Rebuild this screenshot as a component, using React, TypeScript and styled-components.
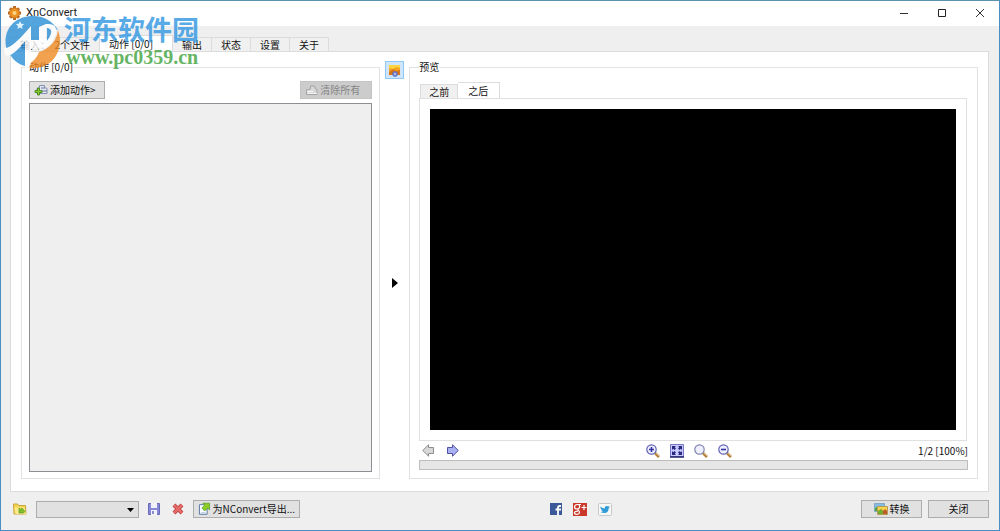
import React, { useState } from "react";
import styled, { createGlobalStyle, css } from "styled-components";

const GlobalStyle = createGlobalStyle`
  * { box-sizing: border-box; }
  body { margin: 0; }
  body, button, select, fieldset {
    font-family: "Noto Sans CJK SC", sans-serif;
    font-size: 10px;
    line-height: 14px;
    color: #111;
  }
`;

const Window = styled.div`
  position: relative;
  display: flex;
  flex-direction: column;
  min-height: 100vh;
  border: 1px solid #4a8fc4;
  border-top-color: #5b93ae;
  background: #efefef;
`;

const TitleBar = styled.header`
  display: flex;
  align-items: center;
  height: 25px;
  padding: 0 0 2px 6px;
  background: #fff;
`;

const Title = styled.h1`
  flex: 1;
  margin: 0 0 0 4px;
  font: 400 11px/16px Roboto, sans-serif;
  color: #222;
`;

const CaptionButton = styled.button`
  width: 38px;
  height: 22px;
  padding: 0;
  border: 0;
  background: transparent;
  svg { display: block; margin: 0 auto; }
`;

const MainTabs = styled.div`
  display: flex;
  align-items: flex-end;
  height: 26px;
  margin-bottom: -1px;
  padding: 0 9px;
`;

const Tab = styled.button<{ $selected?: boolean; $wide?: boolean }>`
  height: 15px;
  padding: 0 9px;
  border: 1px solid #dcdcdc;
  border-left-width: 0;
  background: #f0f0f0;
  line-height: 13px;
  text-align: left;
  white-space: pre;
  &:first-child { border-left-width: 1px; }
  ${(p) => p.$wide && css`min-width: 89px;`}
  ${(p) => p.$selected && css`
    height: 17px;
    min-width: 73px;
    border-bottom-color: #fff;
    background: #fff;
  `}
`;

const Page = styled.main`
  flex: 1;
  display: grid;
  grid-template-columns: minmax(0, 12fr) 29px minmax(0, 19fr);
  margin: 0 10px 0 9px;
  padding: 7px 10px 12px;
  border: 1px solid #dcdcdc;
  background: #fff;
`;

const Group = styled.fieldset`
  display: flex;
  flex-direction: column;
  min-width: 0;
  margin: 0;
  padding: 6px 7px;
  border: 1px solid #e2e2e2;
`;

const PreviewGroup = styled(Group)`
  padding: 6px 9px 8px;
`;

const Legend = styled.legend`
  height: 16px;
  padding: 0;
  line-height: 16px;
  background: #fff;
  white-space: pre;
`;

const Toolbar = styled.div`
  display: flex;
  justify-content: space-between;
`;

const PushButton = styled.button<{ $width: number; $start?: boolean }>`
  display: flex;
  align-items: center;
  justify-content: ${(p) => (p.$start ? "flex-start" : "center")};
  gap: 2px;
  width: ${(p) => p.$width}px;
  height: 18px;
  padding: 0 ${(p) => (p.$start ? 4 : 0)}px;
  border: 1px solid #adadad;
  background: #e1e1e1;
  white-space: nowrap;
  &:disabled { border-color: #c4c4c4; background: #cccccc; color: #858585; }
`;

const ActionList = styled.div`
  flex: 1;
  margin-top: 4px;
  border: 1px solid #8c9094;
  background: #efefef;
`;

const Divider = styled.div`
  display: flex;
  flex-direction: column;
  align-items: center;
  padding-top: 2px;
`;

const PreviewToggle = styled.button`
  width: 19px;
  height: 18px;
  padding: 1px;
  border: 1px solid #90c8f6;
  background: #cfe6fa;
  svg { display: block; margin: auto; }
`;

const CollapseButton = styled.button`
  flex: 1;
  width: 19px;
  padding: 8px 0 0;
  border: 0;
  background: transparent;
  svg { display: block; margin: auto; }
`;

const PreviewTabs = styled.div`
  display: flex;
  align-items: flex-end;
  height: 18px;
  margin: 0 0 -1px 1px;
`;

const PreviewTab = styled(Tab)`
  padding: 0 8px;
  min-width: 37px;
  ${(p) => p.$selected && css`min-width: 42px; padding: 0 10px;`}
`;

const PreviewFrame = styled.div`
  flex: 1;
  display: flex;
  margin-right: 1px;
  padding: 10px;
  border: 1px solid #e0e0e0;
`;

const Canvas = styled.div`
  flex: 1;
  background: #000;
`;

const PreviewBar = styled.div`
  display: flex;
  align-items: center;
  justify-content: space-between;
  height: 19px;
  padding-left: 3px;
`;

const IconRow = styled.div<{ $gap: number }>`
  display: flex;
  align-items: center;
  gap: ${(p) => p.$gap}px;
`;

const IconButton = styled.button`
  display: block;
  padding: 0;
  border: 0;
  background: transparent;
  svg { display: block; }
`;

const SocialLink = styled.a`
  display: block;
  svg { display: block; }
`;

const Progress = styled.div`
  height: 10px;
  border: 1px solid #bdbdbd;
  background: #e6e6e6;
`;

const Footer = styled.footer`
  display: flex;
  align-items: center;
  justify-content: space-between;
  height: 38px;
  padding: 0 10px 4px 12px;
`;

const PresetField = styled.div`
  position: relative;
  svg { position: absolute; right: 5px; top: 7px; pointer-events: none; }
`;

const PresetSelect = styled.select`
  display: block;
  appearance: none;
  width: 103px;
  height: 17px;
  border: 1px solid #adadad;
  border-radius: 0;
  background: #e1e1e1;
`;

const Watermark = styled.div`
  position: absolute;
  left: 3px;
  top: 11px;
  display: flex;
  gap: 2px;
  pointer-events: none;
`;

const WatermarkText = styled.div`
  display: flex;
  flex-direction: column;
`;

const WatermarkName = styled.strong`
  font: 700 27px/34px "Noto Sans CJK SC", sans-serif;
  color: #2f97e2;
  opacity: 0.8;
`;

const WatermarkSite = styled.span`
  padding-left: 2px;
  font: 700 20px/22px "Liberation Serif", serif;
  color: #3fa33d;
  opacity: 0.8;
`;

const GearIcon = () => (
  <svg width="15" height="16" viewBox="0 0 15 16">
    <g stroke="#b96a22" strokeWidth="3">
      <path d="M7.500 1v14M1 8h13M3 3.300l9 9.400M12 3.300l-9 9.400" />
    </g>
    <circle cx="7.500" cy="8" r="5" fill="#ed9322" stroke="#c87421" />
    <circle cx="7.500" cy="8" r="2" fill="#fbd489" />
  </svg>
);

const AddIcon = () => (
  <svg width="14" height="14" viewBox="0 0 14 14">
    <path d="M5.500 4.500v-2h5v2l2.500 1v5H3v-5z" fill="#e4e8f3" stroke="#8390b0" />
    <path d="M7 5h4M8 8h5" stroke="#67739c" />
    <path d="M3.500 5h2v2.500H8v2H5.500V12h-2V9.500H1v-2h2.500z" fill="#86c92b" stroke="#3c7d18" strokeWidth=".8" />
  </svg>
);

const ClearIcon = () => (
  <svg width="13" height="13" viewBox="0 0 13 13">
    <path d="M5.500 5V2h4l1 3 1.500.5v5H1.500V6z" fill="#d9d9d9" stroke="#a3a3a3" />
    <path d="M2 7.500h6M2 9.500h10" stroke="#f5f5f5" />
  </svg>
);

const PictureIcon = () => (
  <svg width="13" height="14" viewBox="0 0 13 14">
    <path d="M1 2h11v10H1z" fill="#f4a51c" />
    <path d="M1 2h11v3L8 4 5 6 1 5z" fill="#ffd43f" />
    <path d="M1 9l4-3 3 2 4-1v5H1z" fill="#d7741d" />
    <circle cx="7" cy="11" r="2.500" fill="#7186d3" stroke="#5d66a8" strokeWidth=".7" />
    <circle cx="7" cy="11" r=".8" fill="#f2f4ff" />
  </svg>
);

const ArrowIcon = ({ forward }: { forward?: boolean }) => (
  <svg width="12" height="13" viewBox="0 0 12 13">
    <path
      d={forward ? "M.5 3.500h5V.8L11.300 6.500 5.500 12.200V9.500h-5z" : "M11.500 3.500h-5V.8L.7 6.500l5.800 5.700V9.500h5z"}
      fill={forward ? "#a9b1f3" : "#d8d8d8"}
      stroke={forward ? "#4e51a3" : "#8d8d8d"}
    />
  </svg>
);

const ZoomIcon = ({ kind }: { kind?: "in" | "out" }) => (
  <svg width="14" height="14" viewBox="0 0 14 14">
    <path d="M9 9l4 4" stroke="#b1803d" strokeWidth="2.600" />
    <path d="M9 8l4.500 4.500" stroke="#e4c17c" />
    <circle cx="5.500" cy="5.500" r="4.700" fill="#eff0ff" stroke={kind ? "#6263b5" : "#8184ad"} strokeWidth="1.200" />
    {kind && <path d={kind === "in" ? "M3 5.500h5M5.500 3v5" : "M3 5.500h5"} stroke="#3434a6" strokeWidth="1.600" />}
  </svg>
);

const FitIcon = () => (
  <svg width="14" height="14" viewBox="0 0 14 14">
    <path d="M.5.5h13v12H.5z" fill="#c9caff" stroke="#7778c4" />
    <path d="M0 13h14" stroke="#22226c" strokeWidth="1.500" />
    <path d="M2 2h4L4.800 3.200 6 4.400 4.400 6 3.200 4.800 2 6zM12 2H8l1.200 1.200L8 4.400 9.600 6l1.200-1.200L12 6zM2 11h4L4.800 9.800 6 8.600 4.400 7 3.200 8.200 2 7zM12 11H8l1.200-1.200L8 8.600 9.600 7l1.200 1.200L12 7z" fill="#28287f" />
  </svg>
);

const FolderIcon = () => (
  <svg width="14" height="12" viewBox="0 0 14 12">
    <path d="M.5 1h4l1 1.500h7l.5 8.500H1z" fill="#f2d451" stroke="#c9a63c" />
    <path d="M1.500 4.500h10l1.500 6.500H2.500z" fill="#fbe98c" />
    <path d="M6 10V5l1.500 1.200L9 5l3 3.500L10.500 10z" fill="#7fbd2b" stroke="#5f9c26" strokeWidth=".7" />
  </svg>
);

const SaveIcon = () => (
  <svg width="12" height="12" viewBox="0 0 12 12">
    <path d="M.5.5h11v11H.5z" fill="#8788d6" stroke="#6a6aba" />
    <path d="M3 0h6v5H3zM3 7h6v5H3z" fill="#f2f2fc" />
    <path d="M4 8h2v3H4z" fill="#8b8ccc" />
  </svg>
);

const DeleteIcon = () => (
  <svg width="12" height="12" viewBox="0 0 12 12">
    <path d="M2 2l8 8M10 2l-8 8" stroke="#b73c3c" strokeWidth="4" />
    <path d="M2 2l8 8M10 2l-8 8" stroke="#e46b68" strokeWidth="2.600" />
  </svg>
);

const ExportIcon = () => (
  <svg width="13" height="14" viewBox="0 0 13 14">
    <path d="M1.500 2.500h8v10h-8z" fill="#f8fbff" stroke="#5878a4" />
    <path d="M3 11h5" stroke="#a8bdd8" />
    <path d="M5 1h7v7l-2-2-3 3-3-3 3-3z" fill="#8ccc25" stroke="#4a961c" strokeWidth=".7" />
  </svg>
);

const ConvertIcon = () => (
  <svg width="14" height="12" viewBox="0 0 14 12">
    <path d="M.5.5h10v8H.5z" fill="#83bce3" stroke="#86a9c4" />
    <path d="M1 5l4-2 5 2v3H1z" fill="#58a53a" />
    <path d="M3.500 3.500h10v8h-10z" fill="#f6d44c" stroke="#b59a55" />
    <path d="M4 9l3-3 2 2 2-2 2 2v3H4z" fill="#bf5b2b" />
    <path d="M4 8l3-2 2 2v3H4z" fill="#73ad2d" />
  </svg>
);

const FacebookIcon = () => (
  <svg width="12" height="12" viewBox="0 0 12 12">
    <path d="M0 0h12v12H0z" fill="#3b5998" />
    <path d="M11 3H9.500Q8 3 8 4.500V12M5.500 6.500H11" fill="none" stroke="#fff" strokeWidth="1.800" />
  </svg>
);

const GooglePlusIcon = () => (
  <svg width="14" height="13" viewBox="0 0 14 13">
    <path d="M0 0h14v13H0z" fill="#c9382b" />
    <path d="M8 1.500H4.500M6 2Q7 3 6.500 4.500 6 6 4 6 1.500 6 1.500 4 1.500 1.500 4.500 1.500M4.500 6l1.500 2q1 2-.5 3Q3 12 1.500 10.500 1 8 5 8.200M8.500 4.500h5M11 2v5" fill="none" stroke="#fff" strokeWidth="1.200" />
  </svg>
);

const TwitterIcon = () => (
  <svg width="14" height="13" viewBox="0 0 14 13">
    <rect x=".5" y=".5" width="13" height="12" rx="1" fill="#f8f8f8" stroke="#c8c8c8" />
    <path d="M2.500 3.500q2 2 4.200 2Q6.500 3 8.700 3q1 0 1.500.6L11.800 3l-.9 1.500.7-.1-1 1.100Q10.500 9.800 6.500 10 4 10 2.500 9q1.700 0 2.500-.8Q3.800 8 3.400 7h.8Q2.700 6.500 2.500 5z" fill="#319bd5" />
  </svg>
);

const WatermarkLogo = () => (
  <svg width="58" height="58" viewBox="0 0 58 58" opacity=".8">
    <path d="M2 35C-1 17 11 4 29 4c12 0 20 6 25 14-5-3-11-4-16-3l-9 3-13 17C11 42 6 45 2 35z" fill="#2a8ed6" />
    <path d="M6 42c6-2 11-7 15-13v25C14 52 9 48 6 42z" fill="#2a8ed6" />
    <path d="M54 18c6 16-2 33-17 37-6 2-11 1-16-1 7-3 12-8 14-14 10-3 18-11 19-22z" fill="#ef8a24" />
    <path d="M27 18l8-4v14h-8zM43 15c7 2 8 10 0 17z" fill="#2a8ed6" />
    <path d="M0 36C6 37 14 29 27 14v14h8V15l7-3v16l1 5-8 4h-8v14c0 3-3 5-6 6V29C14 38 6 46 1 43z" fill="#fff" />
    <path d="M42 12c10-1 12 5 9 12-3 8-8 12-16 15v-6c7-2 11-7 12-12 1-3-1-5-5-5z" fill="#fff" />
    <path d="M16 9l1.200 2.700 3 .3-2.200 2 .6 3-2.600-1.500-2.600 1.500.6-3-2.200-2 3-.3z" fill="#d9f4ff" />
  </svg>
);

const mainTabs = ["输入：  2个文件", "动作 [0/0]", "输出", "状态", "设置", "关于"];
const previewTabs = ["之前", "之后"];

export default function App() {
  const [tab, setTab] = useState(1);
  const [preview, setPreview] = useState(1);

  return (
    <Window>
      <GlobalStyle />
      <TitleBar>
        <GearIcon />
        <Title>XnConvert</Title>
        <CaptionButton aria-label="最小化">
          <svg width="10" height="10"><path d="M1 5.500h8" stroke="#333" /></svg>
        </CaptionButton>
        <CaptionButton aria-label="最大化">
          <svg width="10" height="10"><path d="M1.500 1.500h7v7h-7z" fill="none" stroke="#222" /></svg>
        </CaptionButton>
        <CaptionButton aria-label="关闭窗口">
          <svg width="10" height="10"><path d="M1 1l8 8M9 1l-8 8" stroke="#333" /></svg>
        </CaptionButton>
      </TitleBar>

      <MainTabs role="tablist">
        {mainTabs.map((label, i) => (
          <Tab key={label} role="tab" aria-selected={i === tab} $selected={i === tab} $wide={i === 0} onClick={() => setTab(i)}>
            {label}
          </Tab>
        ))}
      </MainTabs>

      <Page>
        <Group>
          <Legend>动作 [0/0]</Legend>
          <Toolbar>
            <PushButton $width={76} $start><AddIcon />添加动作&gt;</PushButton>
            <PushButton $width={72} $start disabled><ClearIcon />清除所有</PushButton>
          </Toolbar>
          <ActionList />
        </Group>

        <Divider>
          <PreviewToggle aria-label="切换预览"><PictureIcon /></PreviewToggle>
          <CollapseButton aria-label="折叠">
            <svg width="6" height="10"><path d="M0 0l6 5-6 5z" fill="#000" /></svg>
          </CollapseButton>
        </Divider>

        <PreviewGroup>
          <Legend>预览</Legend>
          <PreviewTabs role="tablist">
            {previewTabs.map((label, i) => (
              <PreviewTab key={label} role="tab" aria-selected={i === preview} $selected={i === preview} onClick={() => setPreview(i)}>
                {label}
              </PreviewTab>
            ))}
          </PreviewTabs>
          <PreviewFrame><Canvas /></PreviewFrame>
          <PreviewBar>
            <IconRow $gap={13}>
              <IconButton aria-label="上一个"><ArrowIcon /></IconButton>
              <IconButton aria-label="下一个"><ArrowIcon forward /></IconButton>
            </IconRow>
            <IconRow $gap={10}>
              <IconButton aria-label="放大"><ZoomIcon kind="in" /></IconButton>
              <IconButton aria-label="适合窗口"><FitIcon /></IconButton>
              <IconButton aria-label="实际大小"><ZoomIcon /></IconButton>
              <IconButton aria-label="缩小"><ZoomIcon kind="out" /></IconButton>
            </IconRow>
            <span>1/2 [100%]</span>
          </PreviewBar>
          <Progress role="progressbar" aria-label="进度" />
        </PreviewGroup>
      </Page>

      <Footer>
        <IconRow $gap={9}>
          <IconButton aria-label="打开"><FolderIcon /></IconButton>
          <PresetField>
            <PresetSelect aria-label="预设"><option></option></PresetSelect>
            <svg width="7" height="4"><path d="M0 0h7L3.500 4z" fill="#000" /></svg>
          </PresetField>
          <IconRow $gap={12}>
            <IconButton aria-label="保存"><SaveIcon /></IconButton>
            <IconButton aria-label="删除"><DeleteIcon /></IconButton>
          </IconRow>
          <PushButton $width={107} $start><ExportIcon />为NConvert导出...</PushButton>
        </IconRow>
        <IconRow $gap={11}>
          <SocialLink href="#facebook" aria-label="Facebook"><FacebookIcon /></SocialLink>
          <SocialLink href="#google-plus" aria-label="Google+"><GooglePlusIcon /></SocialLink>
          <SocialLink href="#twitter" aria-label="Twitter"><TwitterIcon /></SocialLink>
        </IconRow>
        <IconRow $gap={6}>
          <PushButton $width={61}><ConvertIcon />转换</PushButton>
          <PushButton $width={61}>关闭</PushButton>
        </IconRow>
      </Footer>

      <Watermark>
        <WatermarkLogo />
        <WatermarkText>
          <WatermarkName>河东软件园</WatermarkName>
          <WatermarkSite>www.pc0359.cn</WatermarkSite>
        </WatermarkText>
      </Watermark>
    </Window>
  );
}
